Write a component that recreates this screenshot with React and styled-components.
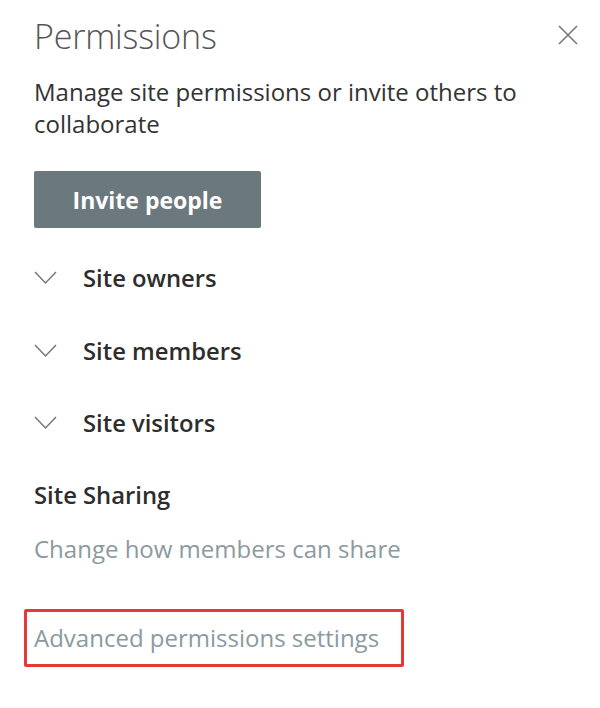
import React from 'react';
import styled, { createGlobalStyle } from 'styled-components';

const GlobalStyle = createGlobalStyle`
  html, body { margin: 0; padding: 0; background: #fff; }
  body { font-family: 'Open Sans', 'Noto Sans', sans-serif; color: #333; }
`;

const Panel = styled.div`
  width: 600px;
  height: 708px;
  box-sizing: border-box;
  padding: 14px 22px 0 34px;
  display: flex;
  flex-direction: column;
`;

const Header = styled.div`
  display: flex;
  justify-content: space-between;
  align-items: flex-start;
`;

const Title = styled.h1`
  margin: 0;
  font-size: 34px;
  font-weight: 300;
  color: #555;
  line-height: 44px;
  letter-spacing: -0.2px;
`;

const CloseButton = styled.button`
  border: 0;
  background: none;
  padding: 0;
  margin: 11px 0 0 0;
  width: 20px;
  height: 20px;
  color: #777;
  cursor: pointer;
`;

const Description = styled.p`
  margin: 18px 0 0;
  max-width: 500px;
  font-size: 24px;
  line-height: 32px;
  color: #333;
`;

const InviteButton = styled.button`
  margin-top: 31px;
  align-self: flex-start;
  width: 227px;
  height: 57px;
  border: 0;
  border-radius: 2px;
  background: #6b787e;
  color: #fff;
  font-family: inherit;
  font-size: 23px;
  font-weight: 700;
`;

const GroupList = styled.div`
  margin-top: 14px;
  display: flex;
  flex-direction: column;
`;

const GroupRow = styled.div`
  height: 72.5px;
  display: flex;
  align-items: center;
  gap: 26px;
  font-size: 23.8px;
  font-weight: 600;
  color: #2d2d2d;
`;

const Chevron = styled.svg`
  width: 23px;
  height: 14px;
  flex: none;
`;

const SectionTitle = styled.h2`
  margin: 19px 0 0;
  font-size: 23.8px;
  font-weight: 600;
  line-height: 32px;
  color: #2d2d2d;
`;

const LinkText = styled.a`
  display: block;
  font-size: 24px;
  line-height: 32px;
  color: #8a9a9f;
  text-decoration: none;
  margin-top: ${p => p.$gap || 0}px;
`;

const Highlight = styled.div`
  margin: 44px 0 0 -10px;
  width: 380px;
  height: 58px;
  box-sizing: border-box;
  border: 3px solid #e53935;
  border-radius: 2px;
  padding: 0 0 0 7px;
  display: flex;
  align-items: center;
`;

const groups = ['Site owners', 'Site members', 'Site visitors'];

export default function App() {
  return (
    <>
      <GlobalStyle />
      <Panel>
        <Header>
          <Title>Permissions</Title>
          <CloseButton aria-label="Close">
            <svg viewBox="0 0 20 20" width="20" height="20">
              <path d="M1 1 L19 19 M19 1 L1 19" stroke="currentColor" strokeWidth="1.6" fill="none" />
            </svg>
          </CloseButton>
        </Header>
        <Description>Manage site permissions or invite others to collaborate</Description>
        <InviteButton>Invite people</InviteButton>
        <GroupList>
          {groups.map(g => (
            <GroupRow key={g}>
              <Chevron viewBox="0 0 23 14">
                <path d="M1 1 L11.5 12 L22 1" stroke="#777" strokeWidth="1.5" fill="none" />
              </Chevron>
              {g}
            </GroupRow>
          ))}
        </GroupList>
        <SectionTitle>Site Sharing</SectionTitle>
        <LinkText $gap={22}>Change how members can share</LinkText>
        <Highlight>
          <LinkText>Advanced permissions settings</LinkText>
        </Highlight>
      </Panel>
    </>
  );
}
